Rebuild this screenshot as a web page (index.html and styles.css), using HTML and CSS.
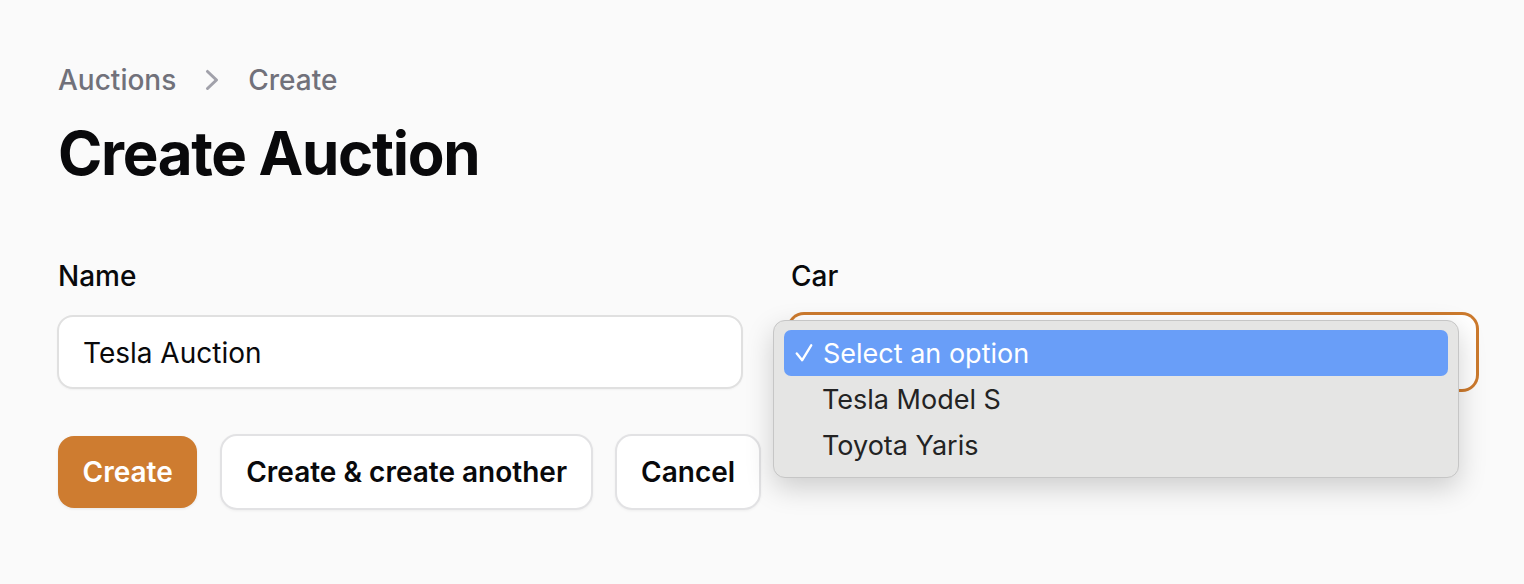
FILE: index.html
```html
<!doctype html>
<html>
<head>
<meta charset="utf-8">
<title>Create Auction</title>
    <link rel="stylesheet" href="styles.css">
</head>

<body>
    <div class="page">
        <!-- 面包屑 -->
        <nav class="breadcrumb">
            <span>Auctions</span>
            <svg class="chevron" viewBox="0 0 20 20" fill="currentColor"><path fill-rule="evenodd" d="M7.21 14.77a.75.75 0 01.02-1.06L11.168 10 7.23 6.29a.75.75 0 111.04-1.08l4.5 4.25a.75.75 0 010 1.08l-4.5 4.25a.75.75 0 01-1.06-.02z" clip-rule="evenodd"/></svg>
            <span>Create</span>
        </nav>

        <h1 class="title">Create Auction</h1>

        <form class="form">
            <div class="fields">
                <div class="field">
                    <label class="label">Name</label>
                    <div class="input">Tesla Auction</div>
                </div>
                <div class="field">
                    <label class="label">Car</label>
                    <div class="select-wrap">
                        <div class="select"></div>
                        <!-- 下拉菜单 -->
                        <ul class="menu">
                            <li class="option active">
                                <svg class="check" viewBox="0 0 20 20" fill="none" stroke="currentColor" stroke-width="2.6" stroke-linecap="round" stroke-linejoin="round"><path d="M2 10.5l6 7.5L18 1.5"/></svg>
                                Select an option
                            </li>
                            <li class="option">Tesla Model S</li>
                            <li class="option">Toyota Yaris</li>
                        </ul>
                    </div>
                </div>
            </div>

            <div class="actions">
                <button type="button" class="btn primary">Create</button>
                <button type="button" class="btn">Create &amp; create another</button>
                <button type="button" class="btn">Cancel</button>
            </div>
        </form>
    </div>
</body>
</html>
```

FILE: styles.css
```css
body{
    margin: 0;
    background: #fafafa;
    font-family: Inter, "Noto Sans", sans-serif;
    color: #09090b;
}

.page{
    padding: 60px 48px 40px 57px;
}

/* 面包屑 */
.breadcrumb{
    display: flex;
    align-items: center;
    gap: 16px;
    height: 40px;
    font-size: 28px;
    font-weight: 500;
    color: #71717a;
    padding-left: 1px;
}
.chevron{
    width: 40px;
    height: 40px;
    color: #a1a1aa;
}

.title{
    margin: 17px 0 0 1px;
    font-size: 60px;
    line-height: 72px;
    font-weight: 700;
    letter-spacing: -0.022em;
}

.form{
    margin-top: 67px;
}
.fields{
    display: grid;
    grid-template-columns: 686px 686px;
    column-gap: 47px;
}
.label{
    display: block;
    font-size: 28px;
    line-height: 40px;
    font-weight: 500;
    margin: 0 0 19px 1px;
}

.input{
    box-sizing: border-box;
    height: 74px;
    padding: 2px 24px 0;
    display: flex;
    align-items: center;
    font-size: 28px;
    background: #fff;
    border: 2px solid #e0e0e0;
    border-radius: 16px;
    box-shadow: 0 1px 2px rgba(0,0,0,.04);
}

.select-wrap{
    position: relative;
}
.select{
    box-sizing: border-box;
    height: 74px;
    background: #fff;
    border-radius: 14px;
    box-shadow: 0 0 0 3px #cc7a2d;
}

/* 原生下拉菜单 */
.menu{
    position: absolute;
    left: -17px;
    top: 5px;
    box-sizing: border-box;
    width: 686px;
    height: 158px;
    margin: 0;
    padding: 9px 10px;
    list-style: none;
    background: #e5e5e4;
    border: 1px solid #c6c6c6;
    border-radius: 12px;
    box-shadow: 0 10px 28px rgba(0,0,0,.18);
}
.option{
    display: flex;
    align-items: center;
    height: 46px;
    padding-left: 38px;
    font-size: 27px;
    color: #232323;
    border-radius: 7px;
}
.option.active{
    background: #699ef8;
    color: #fff;
    padding-left: 11px;
}
.check{
    width: 18px;
    height: 18px;
    margin-right: 10px;
}

.actions{
    display: flex;
    align-items: center;
    gap: 22px;
    margin-top: 45px;
    padding-left: 1px;
}
.btn{
    box-sizing: border-box;
    height: 76px;
    padding: 0 24px;
    font-family: Inter, "Noto Sans", sans-serif;
    font-size: 28px;
    font-weight: 600;
    color: #09090b;
    background: #fff;
    border: 2px solid #e2e2e4;
    border-radius: 17px;
    box-shadow: 0 1px 3px rgba(0,0,0,.05);
}
.btn.primary{
    height: 72px;
    padding: 0 24.5px;
    margin-right: 1px;
    border: none;
    background: #ce7c30;
    color: #fff;
    border-radius: 16px;
    box-shadow: 0 1px 3px rgba(0,0,0,.08);
}
```
